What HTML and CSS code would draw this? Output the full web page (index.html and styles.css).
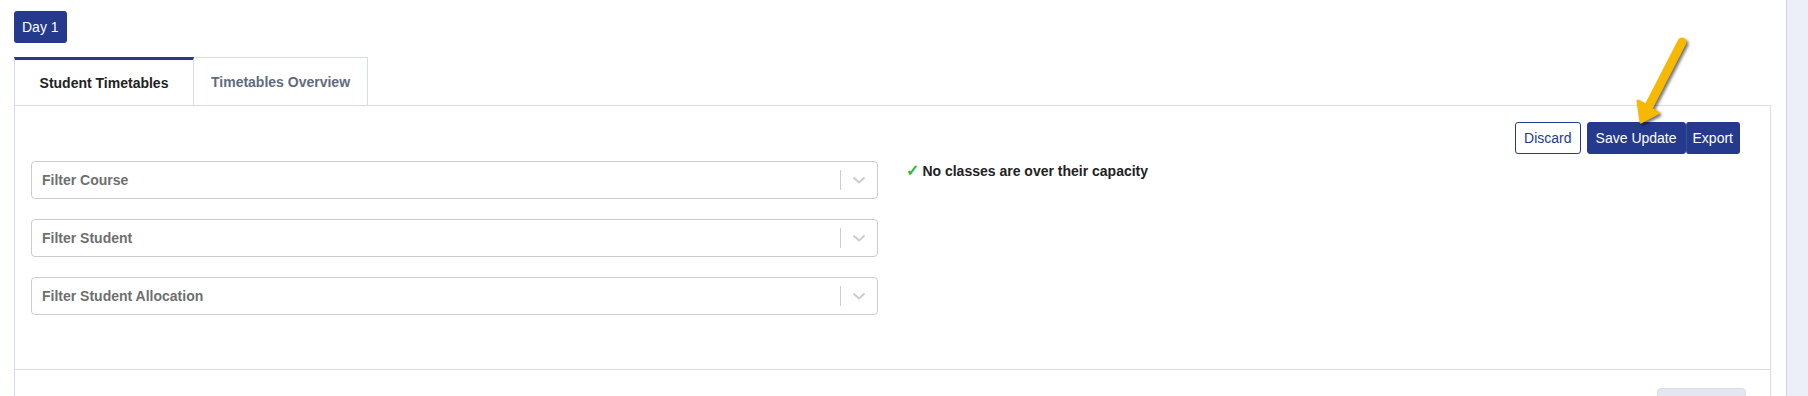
FILE: index.html
```html
<!DOCTYPE html>
<html lang="en">
<head>
    <meta charset="UTF-8">
    <meta name="viewport" content="width=device-width, initial-scale=1.0">
    <title>Student Timetables</title>
    <link rel="stylesheet" href="styles.css">
</head>
<body>
    <div class="page">
        <button class="day-btn">Day 1</button>

        <div class="tabs">
            <div class="tab active">Student Timetables</div>
            <div class="tab">Timetables Overview</div>
        </div>

        <div class="panel">
            <div class="panel-body">
                <div class="actions">
                    <button class="btn btn-outline">Discard</button>
                    <div class="btn-group">
                        <button class="btn btn-primary btn-save">Save Update</button>
                        <button class="btn btn-primary">Export</button>
                    </div>
                </div>

                <div class="columns">
                    <div class="filters">
                        <div class="select">
                            <span class="placeholder">Filter Course</span>
                            <span class="separator"></span>
                            <span class="indicator">
                                <svg viewBox="0 0 20 20" width="20" height="20"><path d="M4.5 7.5 L10 12.5 L15.5 7.5" fill="none" stroke="#cccccc" stroke-width="2"/></svg>
                            </span>
                        </div>
                        <div class="select">
                            <span class="placeholder">Filter Student</span>
                            <span class="separator"></span>
                            <span class="indicator">
                                <svg viewBox="0 0 20 20" width="20" height="20"><path d="M4.5 7.5 L10 12.5 L15.5 7.5" fill="none" stroke="#cccccc" stroke-width="2"/></svg>
                            </span>
                        </div>
                        <div class="select">
                            <span class="placeholder">Filter Student Allocation</span>
                            <span class="separator"></span>
                            <span class="indicator">
                                <svg viewBox="0 0 20 20" width="20" height="20"><path d="M4.5 7.5 L10 12.5 L15.5 7.5" fill="none" stroke="#cccccc" stroke-width="2"/></svg>
                            </span>
                        </div>
                    </div>

                    <div class="status">
                        <span class="check">✓</span> No classes are over their capacity
                    </div>
                </div>
            </div>

            <div class="panel-footer">
                <button class="btn btn-muted"></button>
            </div>
        </div>
    </div>

    <div class="side-strip"></div>

    <!-- annotation arrow pointing at Save Update -->
    <svg class="pointer-arrow" viewBox="0 0 70 100" width="70" height="100">
        <line x1="52" y1="12" x2="19" y2="76" stroke="#f7b900" stroke-width="9" stroke-linecap="round"/>
        <polygon points="11,92 8,71 28,83" fill="#f7b900" stroke="#f7b900" stroke-width="3" stroke-linejoin="round"/>
    </svg>
</body>
</html>
```

FILE: styles.css
```css
:root {
    --brand: #253a8c;
    --border: #d5dde8;
    --text: #222;
}

* {
    box-sizing: border-box;
}

body {
    margin: 0;
    display: flex;
    min-height: 396px;
    font-family: "Liberation Sans", Arial, sans-serif;
    font-size: 14px;
    color: var(--text);
    background: #fff;
    overflow: hidden;
}

.page {
    flex: 1;
    padding: 11px 15px 0 14px;
}

.side-strip {
    width: 22px;
    background: #eceff8;
    border-left: 1px solid #c9d3e1;
}

button {
    font-family: inherit;
    font-size: 14px;
    cursor: pointer;
}

.day-btn {
    display: block;
    height: 32px;
    padding: 0 8px;
    border: none;
    border-radius: 3px;
    background: var(--brand);
    color: #fff;
}

.tabs {
    display: flex;
    margin-top: 14px;
}

.tab {
    height: 48px;
    min-width: 172px;
    padding: 0 17px;
    display: flex;
    align-items: center;
    justify-content: center;
    font-weight: bold;
    color: #5f6b80;
    border: 1px solid var(--border);
    border-bottom: none;
}

.tab + .tab {
    border-left: none;
}

.tab.active {
    min-width: 180px;
    color: #222;
    border-top: 3px solid var(--brand);
}

.panel {
    border: 1px solid var(--border);
    border-bottom: none;
    min-height: 300px;
}

.panel-body {
    padding: 16px 30px 54px 16px;
    border-bottom: 1px solid var(--border);
}

.actions {
    display: flex;
    justify-content: flex-end;
    gap: 6px;
    height: 32px;
}

.btn {
    height: 32px;
    padding: 0 6px;
    border-radius: 3px;
    border: 1px solid var(--brand);
}

.btn-outline {
    background: #fff;
    color: var(--brand);
    padding: 0 8px;
}

.btn-group {
    display: flex;
}

.btn-primary {
    background: var(--brand);
    color: #fff;
}

.btn-group .btn-primary + .btn-primary {
    border-left: 1px solid #3d4f98;
}

.btn-save {
    padding: 0 8px;
}

.columns {
    display: grid;
    grid-template-columns: 1fr 1fr;
    gap: 16px;
    margin-top: 7px;
}

.filters {
    display: flex;
    flex-direction: column;
    gap: 20px;
}

.select {
    height: 38px;
    display: flex;
    align-items: center;
    border: 1px solid #cccccc;
    border-radius: 4px;
    background: #fff;
}

.placeholder {
    flex: 1;
    padding-left: 10px;
    font-weight: bold;
    color: #6f6f6f;
}

.separator {
    width: 1px;
    align-self: stretch;
    margin: 8px 0;
    background: #cccccc;
}

.indicator {
    display: flex;
    padding: 8px;
}

.status {
    padding: 1px 0 0 12px;
    font-weight: bold;
    line-height: 18px;
}

.check {
    color: #34b834;
    font-size: 16px;
}

.panel-footer {
    display: flex;
    justify-content: flex-end;
    padding: 18px 24px 0 0;
}

.btn-muted {
    width: 89px;
    background: #e3e7ef;
    border-color: #d8dde6;
    border-radius: 4px;
}

.pointer-arrow {
    position: absolute;
    left: 1630px;
    top: 30px;
    filter: drop-shadow(2px 2px 1.5px rgba(0, 0, 0, 0.55));
}
```
